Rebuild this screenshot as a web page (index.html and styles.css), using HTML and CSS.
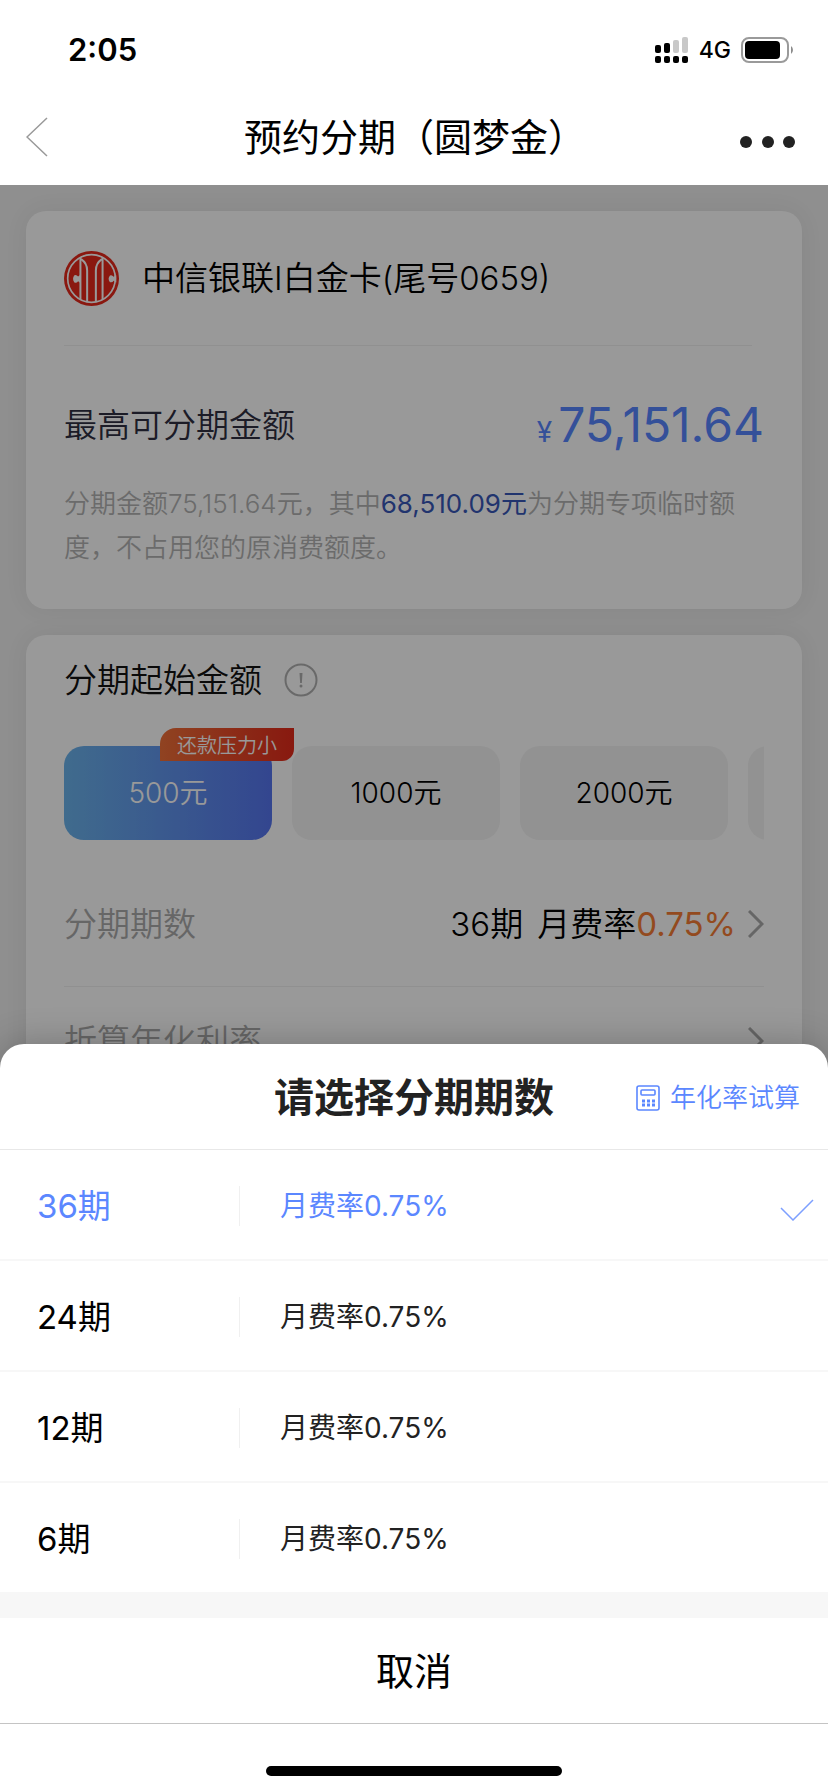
FILE: index.html
```html
<!DOCTYPE html>
<html lang="zh-CN">

<head>
  <meta charset="UTF-8">
  <meta name="viewport" content="width=device-width, initial-scale=1.0">
  <title>预约分期（圆梦金）</title>
  <link rel="stylesheet" href="styles.css">
</head>

<body>
  <div class="status-bar">
    <span class="time">2:05</span>
    <div class="status-icons">
      <svg class="signal" width="34" height="26" viewBox="0 0 34 26">
        <rect x="0" y="8" width="6" height="8" rx="2" />
        <rect x="9" y="6" width="6" height="10" rx="2" />
        <rect x="18" y="3" width="6" height="13" rx="2" fill="#c8c8c8" />
        <rect x="27" y="0" width="6" height="16" rx="2" fill="#c8c8c8" />
        <rect x="0" y="19" width="6" height="7" rx="2" />
        <rect x="9" y="19" width="6" height="7" rx="2" />
        <rect x="18" y="19" width="6" height="7" rx="2" />
        <rect x="27" y="19" width="6" height="7" rx="2" />
      </svg>
      <span class="network">4G</span>
      <svg class="battery" width="54" height="26" viewBox="0 0 54 26">
        <rect x="1" y="1" width="46" height="24" rx="7" fill="none" stroke="#9a9a9a" stroke-width="2" />
        <rect x="4" y="4" width="35" height="18" rx="4" />
        <path d="M50 9a5 5 0 0 1 0 8z" fill="#8c8c8c" />
      </svg>
    </div>
  </div>

  <header class="nav">
    <button class="nav-btn" type="button" aria-label="返回">
      <svg width="22" height="40" viewBox="0 0 22 40">
        <path d="M21 1L1 20l20 19" fill="none" stroke="#999" stroke-width="1.5" />
      </svg>
    </button>
    <h1>预约分期（圆梦金）</h1>
    <button class="nav-btn more" type="button" aria-label="更多">
      <svg width="56" height="12" viewBox="0 0 56 12">
        <circle cx="6" cy="6" r="6" fill="#222" />
        <circle cx="28" cy="6" r="6" fill="#222" />
        <circle cx="49" cy="6" r="6" fill="#222" />
      </svg>
    </button>
  </header>

  <div class="content">
    <main class="cards">
      <section class="card">
        <div class="bank">
          <svg width="55" height="55" viewBox="0 0 164 164">
            <circle cx="82" cy="82" r="82" fill="#e6281b" />
            <circle cx="82" cy="82" r="71" fill="none" stroke="#fff" stroke-width="5" />
            <g fill="none" stroke="#fff" stroke-width="6">
              <path d="M49 20v124" />
              <path d="M51 24q18 12 18 34v93" />
              <path d="M115 20v124" />
              <path d="M113 24q-18 12 -18 34v93" />
            </g>
            <path d="M50 70l-8 6q-4 -6 -11 -4q-8 10 0 22q7 2 11 -4l8 6z" fill="#fff" />
            <path d="M156 72l-8 5q-4 -6 -11 -4q-8 10 0 20q7 2 11 -4l8 5z" fill="#fff" />
          </svg>
          <h2>中信银联I白金卡(尾号0659)</h2>
        </div>
        <div class="quota">
          <span class="quota-label">最高可分期金额</span>
          <span class="quota-value"><small>¥</small>75,151.64</span>
        </div>
        <p class="desc">分期金额75,151.64元，其中<em>68,510.09元</em>为分期专项临时额度，不占用您的原消费额度。</p>
      </section>

      <section class="card plan">
        <div class="plan-title">
          <h2>分期起始金额</h2>
          <button class="tip" type="button" aria-label="说明">
            <svg width="34" height="34" viewBox="0 0 34 34">
              <circle cx="17" cy="17" r="15.5" fill="none" stroke="#b0b0b0" stroke-width="2" />
              <path d="M15.5 10h3l-.6 10h-1.8z" fill="#b0b0b0" />
              <circle cx="17" cy="23" r="1.5" fill="#b0b0b0" />
            </svg>
          </button>
        </div>
        <div class="amounts">
          <button class="amount active" type="button">500元<span class="tag">还款压力小</span></button>
          <button class="amount" type="button">1000元</button>
          <button class="amount" type="button">2000元</button>
          <button class="amount" type="button" aria-label="更多金额"></button>
        </div>
        <div class="row">
          <span class="row-label">分期期数</span>
          <span class="row-value">36期<span class="rate-text">月费率<b>0.75%</b></span></span>
          <svg class="arrow" width="16" height="28" viewBox="0 0 16 28">
            <path d="M1 1l13 13L1 27" fill="none" stroke="#aaa" stroke-width="3" />
          </svg>
        </div>
        <div class="row">
          <span class="row-label">折算年化利率</span>
          <svg class="arrow" width="16" height="28" viewBox="0 0 16 28">
            <path d="M1 1l13 13L1 27" fill="none" stroke="#aaa" stroke-width="3" />
          </svg>
        </div>
      </section>
    </main>

    <div class="mask"></div>

    <div class="sheet" role="dialog" aria-labelledby="sheet-title">
      <div class="sheet-head">
        <h2 id="sheet-title">请选择分期期数</h2>
        <a class="calc" href="#">
          <svg width="24" height="26" viewBox="0 0 24 26" fill="none" stroke="#5b87ff" stroke-width="1.6">
            <rect x="1" y="1" width="22" height="24" rx="2" />
            <rect x="5" y="5" width="14" height="5" rx="1" />
            <path d="M6 16h3M11 16h3M16 16h3M6 20h3M11 20h3M16 20h3" stroke-width="3" />
          </svg>
          年化率试算
        </a>
      </div>
      <div class="options">
        <label class="option">
          <input type="radio" name="term" value="36" checked>
          <span class="term">36期</span>
          <span class="rate">月费率0.75%</span>
          <svg class="check" width="34" height="22" viewBox="0 0 34 22">
            <path d="M1 9l12 12L33 1" fill="none" stroke="#7d9fff" stroke-width="1.5" />
          </svg>
        </label>
        <label class="option">
          <input type="radio" name="term" value="24">
          <span class="term">24期</span>
          <span class="rate">月费率0.75%</span>
        </label>
        <label class="option">
          <input type="radio" name="term" value="12">
          <span class="term">12期</span>
          <span class="rate">月费率0.75%</span>
        </label>
        <label class="option">
          <input type="radio" name="term" value="6">
          <span class="term">6期</span>
          <span class="rate">月费率0.75%</span>
        </label>
      </div>
      <button class="cancel" type="button">取消</button>
      <div class="home"></div>
    </div>
  </div>
</body>

</html>
```

FILE: styles.css
```css
* {
  box-sizing: border-box;
}

body {
  margin: 0;
  min-height: 100vh;
  display: flex;
  flex-direction: column;
  background: #fff;
  color: #000;
  font-family: Inter, "Noto Sans CJK SC", sans-serif;
  font-size: 33px;
  line-height: 46px;
}

h1,
h2,
p {
  margin: 0;
  font-size: inherit;
  font-weight: inherit;
}

button {
  padding: 0;
  border: 0;
  background: none;
  color: inherit;
  font: inherit;
}

svg {
  display: block;
}

/* top bars */
.status-bar {
  display: flex;
  align-items: center;
  justify-content: space-between;
  height: 100px;
  padding: 0 33px 0 68px;
}

.time {
  font-size: 31px;
  font-weight: 600;
}

.status-icons {
  display: flex;
  align-items: center;
  gap: 10px;
}

.network {
  font-size: 23px;
  font-weight: 500;
}

.nav {
  display: grid;
  grid-template-columns: 1fr auto 1fr;
  align-items: center;
  height: 85px;
  padding: 0 32px 12px 26px;
}

.nav h1 {
  padding-left: 8px;
  font-size: 38px;
}

.nav-btn {
  justify-self: start;
}

.more {
  justify-self: end;
  padding-top: 10px;
}

/* page behind the sheet */
.content {
  position: relative;
  flex: 1;
  overflow: hidden;
  background: #eee;
}

.cards {
  position: absolute;
  z-index: 0;
  top: 0;
  left: 0;
  right: 0;
  display: flex;
  flex-direction: column;
  gap: 26px;
  padding: 26px;
  font-weight: 350;
}

.card {
  padding: 0 38px 39px;
  border-radius: 20px;
  background: #fff;
  box-shadow: 0 0 24px rgba(0, 0, 0, 0.06);
}

.bank {
  display: flex;
  align-items: center;
  gap: 23px;
  height: 135px;
  margin-right: 12px;
  border-bottom: 1px solid #f0f0f0;
}

.quota {
  display: flex;
  align-items: center;
  justify-content: space-between;
  height: 136px;
  padding-top: 22px;
}

.quota-label {
  color: #2f2f42;
}

.quota-value {
  padding-top: 6px;
  color: #5785ff;
  font-size: 48px;
  font-weight: 400;
}

.quota-value small {
  margin-right: 6px;
  font-size: 28px;
}

.desc {
  margin-right: 12px;
  color: #b3b3b3;
  font-size: 26px;
  line-height: 44px;
}

.desc em {
  color: #3857b8;
  font-style: normal;
  font-weight: 400;
}

.plan-title {
  display: flex;
  align-items: center;
  gap: 22px;
  padding-top: 22px;
  color: #111;
}

.amounts {
  display: flex;
  gap: 20px;
  padding-top: 43px;
  overflow: hidden;
}

.amount {
  position: relative;
  flex: 0 0 208px;
  height: 94px;
  border-radius: 20px;
  background: #f3f3f3;
  font-size: 28px;
}

.amount.active {
  z-index: 1;
  background: linear-gradient(90deg, #6bb3ec, #5675ee);
  color: #fff;
}

.tag {
  position: absolute;
  top: -18px;
  right: -22px;
  padding: 3px 17px 0;
  border-radius: 16px 0 12px 0;
  background: linear-gradient(90deg, #f07038, #e32a1a);
  font-size: 20px;
  line-height: 30px;
}

.row {
  display: flex;
  align-items: center;
  padding: 31px 0 39px;
  border-bottom: 1px solid #f0f0f0;
}

.amounts + .row {
  margin-top: 30px;
}

.row-label {
  color: #aaa;
}

.row-value {
  margin-left: auto;
}

.rate-text {
  margin-left: 14px;
}

.rate-text b {
  color: #f57c35;
  font-weight: 400;
}

.arrow {
  margin-left: auto;
}

.row-value + .arrow {
  margin-left: 12px;
}

.mask {
  position: absolute;
  z-index: 1;
  inset: 0;
  background: rgba(0, 0, 0, 0.4);
}

/* bottom sheet */
.sheet {
  position: absolute;
  z-index: 2;
  left: 0;
  right: 0;
  bottom: 0;
  border-radius: 24px 24px 0 0;
  background: #fff;
  box-shadow: 0 0 36px rgba(0, 0, 0, 0.24);
}

.sheet-head {
  display: grid;
  grid-template-columns: 1fr auto 1fr;
  align-items: center;
  height: 106px;
  padding: 2px 28px 0;
  border-bottom: 1px solid #e8e8e8;
}

.sheet-head h2 {
  grid-column: 2;
  color: #222;
  font-size: 40px;
  font-weight: 700;
}

.calc {
  display: flex;
  align-items: center;
  justify-self: end;
  gap: 10px;
  color: #5b87ff;
  font-size: 26px;
  font-weight: 350;
  text-decoration: none;
}

.option {
  display: flex;
  align-items: center;
  height: 111px;
  padding: 2px 14px 0 37px;
  border-bottom: 2px solid #f7f7f7;
}

.option input {
  position: absolute;
  opacity: 0;
}

.term {
  width: 203px;
  border-right: 1px solid #f0f0f0;
  line-height: 40px;
}

.rate {
  margin-left: 40px;
  color: #222;
  font-size: 28px;
}

.option input:checked ~ span {
  color: #5b87ff;
}

.check {
  margin-left: auto;
  margin-top: 8px;
}

.cancel {
  display: block;
  width: 100%;
  height: 130px;
  border-top: 24px solid #f7f7f7;
  border-bottom: 1px solid #c4c4c4;
  font-size: 38px;
}

.home {
  width: 296px;
  height: 10px;
  margin: 42px auto 16px;
  border-radius: 5px;
  background: #000;
}
```
